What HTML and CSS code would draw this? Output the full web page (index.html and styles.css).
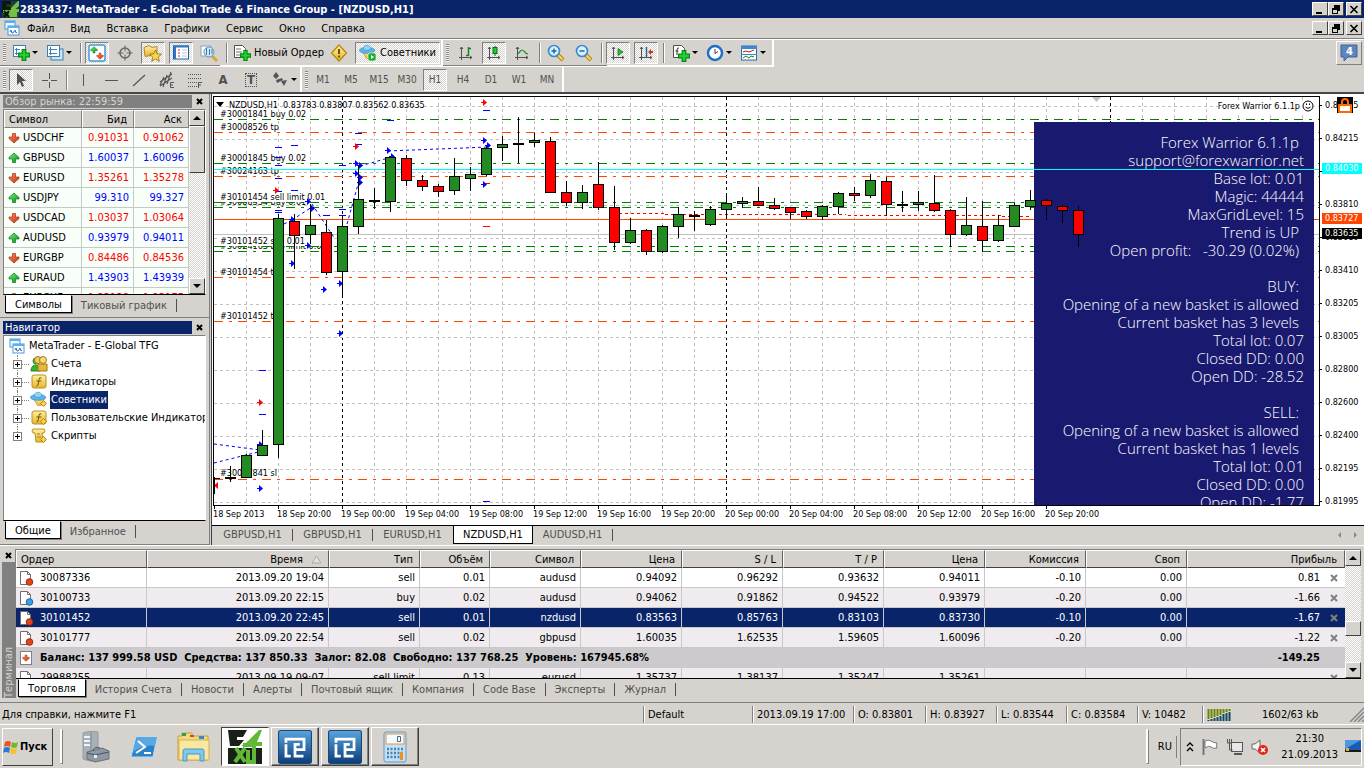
FILE: index.html
```html
<!DOCTYPE html>
<html lang="ru">
<head>
<meta charset="utf-8">
<title>2833437: MetaTrader - E-Global Trade &amp; Finance Group - [NZDUSD,H1]</title>
<link rel="stylesheet" href="styles.css">
</head>
<body>
<svg class="defs" width="0" height="0" aria-hidden="true">
  <defs>
    <linearGradient id="gBlue" x1="0" y1="0" x2="0" y2="1"><stop offset="0" stop-color="#5aa6dc"/><stop offset="1" stop-color="#0b3c78"/></linearGradient>
    <linearGradient id="gGold" x1="0" y1="0" x2="0" y2="1"><stop offset="0" stop-color="#fff0a0"/><stop offset="1" stop-color="#e8b428"/></linearGradient>
    <linearGradient id="gRed" x1="0" y1="0" x2="1" y2="1"><stop offset="0" stop-color="#ff9060"/><stop offset="1" stop-color="#c83010"/></linearGradient>
    <linearGradient id="gGreen" x1="0" y1="0" x2="1" y2="1"><stop offset="0" stop-color="#70f080"/><stop offset="1" stop-color="#089018"/></linearGradient>
    <symbol id="plus" viewBox="0 0 10 10"><path d="M3.500 .5h3v3h3v3h-3v3h-3v-3h-3v-3h3z" fill="#20d030" stroke="#078a10"/></symbol>
    <symbol id="down" viewBox="0 0 12 12"><path d="M4.500 1.500h3V5H11v1.500L6 11 1 6.500V5h3.500z" fill="url(#gRed)" stroke="#a03010" stroke-width=".7"/></symbol>
    <symbol id="up" viewBox="0 0 12 12"><path d="M4.500 10.500h3V7H11V5.500L6 1 1 5.500V7h3.500z" fill="url(#gGreen)" stroke="#087018" stroke-width=".7"/></symbol>
    <symbol id="doc" viewBox="0 0 16 16"><path d="M2.500 1.500h7l3 3v10h-10z" fill="#fff" stroke="#707070"/><path d="M9.500 1.500v3h3" fill="none" stroke="#707070"/></symbol>
    <symbol id="charts" viewBox="0 0 16 16"><rect x="1" y="1" width="10" height="8" fill="#eef8ff" stroke="#4898d8"/><rect x="1" y="1" width="10" height="2" fill="#58b0f0"/><rect x="4" y="6" width="11" height="9" fill="#fff" stroke="#4898d8"/><rect x="4" y="6" width="11" height="2" fill="#58b0f0"/><path d="M6 12l1-2 1 3h1l2-3 1 3 1-1" fill="none" stroke="#3070c0"/></symbol>
    <symbol id="hat" viewBox="0 0 20 20"><path d="M4 9l5 8h4l4-8z" fill="url(#gGold)" stroke="#c89c30"/><ellipse cx="9.500" cy="7.500" rx="9" ry="3.500" fill="#5cb4e8" stroke="#3c8cc4" stroke-width=".8"/><path d="M5 6c0-6 9-6 9 0-2 2-7 2-9 0z" fill="#90d4f8" stroke="#3c8cc4" stroke-width=".7"/></symbol>
    <symbol id="diamond" viewBox="0 0 8 8"><path d="M4 .5L7.500 4 4 7.500.5 4z" fill="#f6d040" stroke="#a88010"/></symbol>
    <symbol id="axes" viewBox="0 0 16 16"><path d="M3.500 2v13M1 12.500h13M2 4l1.500-2L5 4M12 11l2 1.500-2 1.500" fill="none" stroke="#505050"/></symbol>
    <symbol id="lens" viewBox="0 0 18 18"><path d="M10.500 10.500l5.500 5.500" stroke="#b08018" stroke-width="4"/><path d="M11 11l4.500 4.500" stroke="#f8dc60" stroke-width="2"/><circle cx="7" cy="7" r="5.500" fill="#d8f0ff" stroke="#3a88c8" stroke-width="1.600"/></symbol>
    <symbol id="mscroll" viewBox="0 0 8 4"><path d="M0 4L4 0l4 4z"/></symbol>
    <symbol id="rlogo" viewBox="0 0 32 32"><rect x=".5" y=".5" width="31" height="31" rx="2" fill="url(#gBlue)" stroke="#184878"/><path d="M7.500 12V8.500h17v10H16v-5h4.500M7.500 13.500v11H12M16 18.500v6h8" fill="none" stroke="#fff" stroke-width="2.600"/></symbol>
  </defs>
</svg>

<header class="titlebar">
  <svg class="app-icon" width="17" height="17" viewBox="0 0 34 34" aria-hidden="true"><path fill="#0c180c" d="M0 0h18v7H9v4h8v7H9v6H0z"/><path fill="#74c044" d="M18 14L32 0h2v10l-7 6h7v6h-4v10H10l4-8H2v-6h16z"/><path d="M4 20l10 12m0-12L4 32" stroke="#0c180c" stroke-width="4"/></svg>
  <h1>2833437: MetaTrader - E-Global Trade &amp; Finance Group - [NZDUSD,H1]</h1>
  <div class="winbtns">
    <button aria-label="Свернуть"><svg width="10" height="9"><path d="M1 7h6v2H1z"/></svg></button>
    <button aria-label="Восстановить"><svg width="10" height="9"><path d="M3 0h6v6H7V3H3zM1 3h6v6H1zm1 2v3h4V5z" fill-rule="evenodd"/></svg></button>
    <button aria-label="Закрыть" class="gap"><svg width="10" height="9"><path d="M1.500 1l7 7m0-7l-7 7" stroke="#000" stroke-width="1.600"/></svg></button>
  </div>
</header>

<nav class="menubar">
  <svg width="16" height="16" aria-hidden="true"><use href="#charts"/></svg>
  <div class="menu"><button>Файл</button><button>Вид</button><button>Вставка</button><button>Графики</button><button>Сервис</button><button>Окно</button><button>Справка</button></div>
  <div class="winbtns">
    <button aria-label="Свернуть график"><svg width="10" height="9"><path d="M1 7h6v2H1z"/></svg></button>
    <button aria-label="Восстановить график"><svg width="10" height="9"><path d="M3 0h6v6H7V3H3zM1 3h6v6H1zm1 2v3h4V5z" fill-rule="evenodd"/></svg></button>
    <button aria-label="Закрыть график" class="gap"><svg width="10" height="9"><path d="M1.500 1l7 7m0-7l-7 7" stroke="#000" stroke-width="1.600"/></svg></button>
  </div>
</nav>

<div class="toolrow">
  <div class="toolbar">
    <i class="grip"></i>
    <button class="drop" aria-label="Новый график"><svg width="18" height="18"><rect x="1.500" y="1.500" width="12" height="11" fill="#fff" stroke="#3a80b8"/><path d="M4.500 4v7M3 5.500h5M3 9.500h4" stroke="#3a80b8"/><use href="#plus" x="6" y="5" width="12" height="12"/></svg><b></b></button>
    <button class="drop" aria-label="Профили"><svg width="18" height="18"><rect x="5" y="5" width="12" height="11" fill="#c8e4f8" stroke="#3a80b8"/><rect x="1.500" y="1.500" width="12" height="11" fill="#fff" stroke="#3a80b8"/><path d="M4.500 3v8M3 5.500h8M3 9.500h8" stroke="#3a80b8"/></svg><b></b></button>
    <i class="sep"></i>
    <button class="tb on" aria-label="Обзор рынка"><svg width="18" height="18"><rect x="1" y="1" width="16" height="16" rx="2" fill="#fff" stroke="#3a9ce0" stroke-width="1.500"/><use href="#up" x="2" y="2" width="8" height="8"/><use href="#down" x="8" y="8" width="8" height="8"/></svg></button>
    <button class="tb" aria-label="Окно данных"><svg width="18" height="18" fill="none" stroke="#666"><circle cx="9" cy="9" r="5" stroke-width="1.500"/><path d="M9 1.500v6M9 10.500v6M1.500 9h6M10.500 9h6"/></svg></button>
    <button class="tb on" aria-label="Навигатор"><svg width="20" height="18"><path d="M1 3.500l5-2 3 2 5-1v8l-12 2z" fill="url(#gGold)" stroke="#b08a28"/><path d="M12.500 6l1.700 3.800 4.300.4-3.200 2.900 1 4.200-3.800-2.200-3.800 2.200 1-4.200-3.200-2.900 4.300-.4z" fill="#f8d448" stroke="#8a6c14" stroke-width=".8"/></svg></button>
    <button class="tb on" aria-label="Терминал"><svg width="18" height="18"><rect x="1.500" y="2" width="15" height="13" fill="#fff" stroke="#2060a8"/><path d="M1 2.500h16M3 2v13" stroke="#2878c8" stroke-width="2"/><path d="M6 6h2M6 9h2M6 12h2" stroke="#c03030"/><path d="M10 6h5M10 9h5M10 12h5" stroke="#b0c8e0"/></svg></button>
    <button class="tb" aria-label="Тестер стратегий"><svg width="18" height="18"><path d="M1 2h10v10H1z" fill="#fff" stroke="#88a0b8"/><path d="M12 12l5 5" stroke="#d8a830" stroke-width="3"/><circle cx="9" cy="8" r="5" fill="#d0e8f8" stroke="#6098c8"/><path d="M6.500 4v7M9.500 5v6M12 5v5" stroke="#4078a8"/></svg></button>
    <i class="sep"></i>
    <button class="txt"><svg width="18" height="18"><path d="M1.500 1.500h8l3 3v9h-11z" fill="#fff" stroke="#505050"/><path d="M3 5h5M3 8h6M3 11h4" stroke="#707070"/><use href="#plus" x="7" y="6" width="11" height="11"/></svg>Новый Ордер</button>
    <button class="tb" aria-label="MetaEditor"><svg width="18" height="18"><path d="M9 1l7.500 8L9 17 1.500 9z" fill="url(#gGold)" stroke="#b48608" stroke-width="1.200"/><path d="M9 5v5M9 11.500v2" stroke="#5c4400" stroke-width="1.800"/></svg></button>
    <button class="txt on"><svg width="18" height="18"><use href="#hat" width="17" height="17"/><rect x="9" y="9" width="8" height="8" rx="2" fill="#18b028" stroke="#fff" stroke-width=".6"/><path d="M12 11l3 2-3 2z" fill="#fff"/></svg>Советники</button>
  </div>
  <div class="toolbar">
    <i class="grip"></i>
    <button class="tb" aria-label="Бары"><svg width="16" height="16"><use href="#axes"/><path d="M10.500 2v9M8 10.500h2M11 3.500h2" stroke="#108820" stroke-width="1.500"/></svg></button>
    <button class="tb on" aria-label="Японские свечи"><svg width="16" height="16"><use href="#axes"/><path d="M9 1v10" stroke="#087018"/><rect x="7" y="2.500" width="4" height="6" fill="#20c838" stroke="#087018"/></svg></button>
    <button class="tb" aria-label="Линия"><svg width="16" height="16"><use href="#axes"/><path d="M3 9c3-1 3-4 5-4s3 4 6 4" fill="none" stroke="#108820" stroke-width="1.200"/></svg></button>
    <i class="sep"></i>
    <button class="tb" aria-label="Приблизить"><svg width="18" height="18"><use href="#lens"/><path d="M4.500 7h5M7 4.500v5" stroke="#1868b0" stroke-width="1.500"/></svg></button>
    <button class="tb" aria-label="Отдалить"><svg width="18" height="18"><use href="#lens"/><path d="M4.500 7h5" stroke="#1868b0" stroke-width="1.500"/></svg></button>
    <i class="sep"></i>
    <button class="tb on" aria-label="Автопрокрутка"><svg width="16" height="16"><use href="#axes"/><path d="M8 3.500l5 3.500-5 3.500z" fill="#20c030" stroke="#087018" stroke-width=".7"/></svg></button>
    <button class="tb on" aria-label="Сдвиг графика"><svg width="16" height="16"><use href="#axes"/><path d="M8.500 2v10" stroke="#1868b0" stroke-width="1.500"/><path d="M10 7l3-3v2h2v2h-2v2z" fill="#d03810"/></svg></button>
    <i class="sep"></i>
    <button class="drop" aria-label="Индикаторы"><svg width="18" height="18"><path d="M1.500 1.500h8l3 3v9h-11z" fill="#fff" stroke="#505050"/><path d="M7 4q-2-.5-2 2v5M3.500 7h3" stroke="#333" fill="none"/><use href="#plus" x="6" y="6" width="12" height="12"/></svg><b></b></button>
    <button class="drop" aria-label="Периоды"><svg width="18" height="18"><circle cx="9" cy="9" r="7" fill="#fff" stroke="#1c70c8" stroke-width="2.500"/><path d="M9 5v4.500l3-2" fill="none" stroke="#404040"/></svg><b></b></button>
    <button class="drop" aria-label="Шаблоны"><svg width="18" height="18"><rect x="1.500" y="2" width="15" height="14" fill="#fff" stroke="#2c6ca8"/><path d="M1 3.500h16" stroke="#3a88d0" stroke-width="3"/><path d="M1 10.500h16" stroke="#3a88d0"/><path d="M3 8l3-1 3 1 5-2" fill="none" stroke="#b02020"/><path d="M3 14l3-2 3 2 2-2 3 1" fill="none" stroke="#108820"/></svg><b></b></button>
  </div>
  <button class="chat" aria-label="Сообщения: 4"><svg width="18" height="18"><path d="M1 1h16v12H8l-4 4v-4H1z" fill="#5c86bc" stroke="#3c649c"/></svg><span>4</span></button>
</div>

<div class="toolrow second">
  <div class="toolbar lines">
    <i class="grip"></i>
    <button class="tb on" aria-label="Курсор"><svg width="16" height="16"><path d="M4 1v12l3-3 2 5 2-1-2-5h4z" fill="#505050"/></svg></button>
    <button class="tb" aria-label="Перекрестие"><svg width="16" height="16"><path d="M8.500 1v6M8.500 10v6M1 8.500h6M10 8.500h6" stroke="#555"/></svg></button>
    <i class="sep"></i>
    <button class="tb" aria-label="Вертикальная линия"><svg width="16" height="16"><path d="M8.500 2v12" stroke="#555"/></svg></button>
    <button class="tb" aria-label="Горизонтальная линия"><svg width="16" height="16"><path d="M2 8.500h13" stroke="#555"/></svg></button>
    <button class="tb" aria-label="Трендовая линия"><svg width="16" height="16"><path d="M2 14L14 3" stroke="#555" stroke-width="1.200"/></svg></button>
    <button class="tb" aria-label="Канал"><svg width="18" height="18"><path d="M2 11L14 3M2 15L14 7M5 16L9 4M9 13l4-12M2 14L6 6" stroke="#555" stroke-width="1.200"/><path d="M16 11.500h-3.500v5H16M12.500 14H15" fill="none" stroke="#555"/></svg></button>
    <button class="tb" aria-label="Фибоначчи"><svg width="18" height="18"><path d="M2 3.500h14M2 7.500h14M2 11.500h9M2 15.500h9" stroke="#555" stroke-dasharray="1 1"/><path d="M12.500 17v-5.500H16M12.500 14H15" fill="none" stroke="#555"/></svg></button>
    <button class="tb glyph" aria-label="Текст">A</button>
    <button class="tb glyph" aria-label="Метка"><span class="boxed">T</span></button>
    <button class="drop" aria-label="Стрелки"><svg width="18" height="18"><path d="M2 5l3-4 3 4-3 3zM10 10l6-1-3 6zM5 9l6-2 1 2-6 3z" fill="#555"/></svg><b></b></button>
  </div>
  <div class="toolbar frames">
    <i class="grip"></i>
    <button class="tb tf">M1</button><button class="tb tf">M5</button><button class="tb tf">M15</button><button class="tb tf">M30</button><button class="tb tf on">H1</button><button class="tb tf">H4</button><button class="tb tf">D1</button><button class="tb tf">W1</button><button class="tb tf">MN</button>
  </div>
</div>

<main class="work">
  <aside class="docks">
    <section class="dock">
      <header class="dock-head idle"><h2>Обзор рынка: 22:59:59</h2><button aria-label="Закрыть обзор рынка"><svg width="7" height="7"><path d="M1 1l5 5m0-5L1 6" stroke="#000" stroke-width="2"/></svg></button></header>
      <div class="dock-body">
        <div class="clip">
          <table class="quotes">
            <colgroup><col><col class="w52"><col class="w55"></colgroup>
            <thead><tr><th>Символ</th><th>Бид</th><th>Аск</th></tr></thead>
            <tbody>
              <tr class="dn"><td><svg width="12" height="12"><use href="#down"/></svg>USDCHF</td><td>0.91031</td><td>0.91062</td></tr>
              <tr class="up"><td><svg width="12" height="12"><use href="#up"/></svg>GBPUSD</td><td>1.60037</td><td>1.60096</td></tr>
              <tr class="dn"><td><svg width="12" height="12"><use href="#down"/></svg>EURUSD</td><td>1.35261</td><td>1.35278</td></tr>
              <tr class="up"><td><svg width="12" height="12"><use href="#up"/></svg>USDJPY</td><td>99.310</td><td>99.327</td></tr>
              <tr class="dn"><td><svg width="12" height="12"><use href="#down"/></svg>USDCAD</td><td>1.03037</td><td>1.03064</td></tr>
              <tr class="up"><td><svg width="12" height="12"><use href="#up"/></svg>AUDUSD</td><td>0.93979</td><td>0.94011</td></tr>
              <tr class="dn"><td><svg width="12" height="12"><use href="#down"/></svg>EURGBP</td><td>0.84486</td><td>0.84536</td></tr>
              <tr class="up"><td><svg width="12" height="12"><use href="#up"/></svg>EURAUD</td><td>1.43903</td><td>1.43939</td></tr>
              <tr class="dn"><td><svg width="12" height="12"><use href="#down"/></svg>EURCHF</td><td>1.23138</td><td>1.23175</td></tr>
            </tbody>
          </table>
        </div>
        <div class="scroll"><button aria-label="Вверх"><svg width="8" height="4"><use href="#mscroll"/></svg></button><span class="thumb tall"></span><button class="last" aria-label="Вниз"><svg width="8" height="4" class="flip"><use href="#mscroll"/></svg></button></div>
      </div>
      <div class="tabs"><button class="active">Символы</button><button>Тиковый график</button></div>
    </section>
    <section class="dock">
      <header class="dock-head"><h2>Навигатор</h2><button aria-label="Закрыть навигатор"><svg width="7" height="7"><path d="M1 1l5 5m0-5L1 6" stroke="#000" stroke-width="2"/></svg></button></header>
      <div class="dock-body">
        <ul class="tree">
          <li class="root"><svg width="16" height="16"><use href="#charts"/></svg><span>MetaTrader - E-Global TFG</span></li>
          <li><i class="exp"></i><svg width="18" height="18"><circle cx="6" cy="6" r="3" fill="#58c848" stroke="#208818"/><path d="M1 16c0-8 9-8 9 0z" fill="#38b030" stroke="#208818"/><circle cx="8" cy="5" r="3.500" fill="#f0cc58" stroke="#a07818"/><circle cx="13" cy="5" r="3.500" fill="#f8dc78" stroke="#a07818"/><path d="M8 16V9h9v7z" fill="#e8b838" stroke="#a07818"/></svg><span>Счета</span></li>
          <li><i class="exp"></i><svg width="18" height="18"><rect x="2" y="2" width="14" height="13" rx="2" fill="url(#gGold)" stroke="#b89020"/><path d="M11.500 5q-2.500-1-2.500 1.500L8 12q-.5 1-1.500 1M6.500 8h5" fill="none" stroke="#705408"/></svg><span>Индикаторы</span></li>
          <li class="sel"><i class="exp"></i><svg width="18" height="18"><use href="#hat" width="17" height="17"/><use href="#diamond" x="10" y="9" width="7" height="7"/></svg><span>Советники</span></li>
          <li><i class="exp"></i><svg width="18" height="18"><rect x="2" y="2" width="14" height="13" rx="2" fill="url(#gGold)" stroke="#b89020"/><path d="M11.500 5q-2.500-1-2.500 1.500L8 12q-.5 1-1.500 1M6.500 8h5" fill="none" stroke="#705408"/><use href="#diamond" x="10" y="9" width="7" height="7"/></svg><span>Пользовательские Индикаторы</span></li>
          <li class="end"><i class="exp"></i><svg width="18" height="18"><path d="M3 2h11q2 2 0 4h-2l1 9H6L5 6H3q-2-2 0-4z" fill="url(#gGold)" stroke="#b89020"/><path d="M7 7h3M7 10h4" stroke="#a07818"/><use href="#diamond" x="10" y="9" width="7" height="7"/></svg><span>Скрипты</span></li>
        </ul>
      </div>
      <div class="tabs"><button class="active">Общие</button><button>Избранное</button></div>
    </section>
  </aside>

  <section class="chartwin">
    <div class="chart">
      <div class="plot">
        <svg id="back" class="layer" aria-hidden="true"></svg>
        <div class="ea">
          <p class="in">Forex Warrior 6.1.1p</p><p>support@forexwarrior.net</p><p>Base lot: 0.01</p><p>Magic: 44444</p><p>MaxGridLevel: 15</p><p class="in">Trend is UP</p><p class="in">Open profit: &nbsp; -30.29 (0.02%)</p><p>&nbsp;</p>
          <p class="in">BUY:</p><p class="in">Opening of a new basket is allowed</p><p class="in">Current basket has 3 levels</p><p>Total lot: 0.07</p><p>Closed DD: 0.00</p><p>Open DD: -28.52</p><p>&nbsp;</p>
          <p class="in">SELL:</p><p class="in">Opening of a new basket is allowed</p><p class="in">Current basket has 1 levels</p><p>Total lot: 0.01</p><p>Closed DD: 0.00</p><p>Open DD: -1.77</p>
        </div>
        <svg id="front" class="layer" aria-hidden="true"></svg>
        <div class="ea-name">Forex Warrior 6.1.1p<svg width="12" height="12" fill="none" stroke="#000"><circle cx="6" cy="6" r="5"/><path d="M3.500 7q2.500 3 5 0M4.500 3.500v1.500M7.500 3.500v1.500"/></svg></div>
      </div>
      <div class="prices">
        <span>0.84415</span><span>0.84215</span><span>0.84015</span><span>0.83810</span><span>0.83610</span><span>0.83410</span><span>0.83205</span><span>0.83005</span><span>0.82800</span><span>0.82600</span><span>0.82400</span><span>0.82195</span><span>0.81995</span>
        <mark class="ask">0.84030</mark><mark class="level">0.83727</mark><mark class="bid">0.83635</mark>
        <svg class="lock" width="16" height="16"><path d="M0 0h16v16H0z"/><path d="M5 8V5q0-3 3-3t3 3v3" fill="none" stroke="#ff6a00" stroke-width="2"/><rect x="1" y="7" width="14" height="9" rx="1" fill="#ff6a00"/><rect x="3" y="9" width="10" height="5" fill="#fff"/></svg>
      </div>
      <div class="times"><span>18 Sep 2013</span><span>18 Sep 20:00</span><span>19 Sep 00:00</span><span>19 Sep 04:00</span><span>19 Sep 08:00</span><span>19 Sep 12:00</span><span>19 Sep 16:00</span><span>19 Sep 20:00</span><span>20 Sep 00:00</span><span>20 Sep 04:00</span><span>20 Sep 08:00</span><span>20 Sep 12:00</span><span>20 Sep 16:00</span><span>20 Sep 20:00</span></div>
    </div>
    <div class="chart-tabs"><button>GBPUSD,H1</button><button>GBPUSD,H1</button><button class="pre">EURUSD,H1</button><button class="active">NZDUSD,H1</button><button>AUDUSD,H1</button>
      <svg width="34" height="10" fill="#888"><path d="M12 2v6L9 5zM25 2v6l3-3z"/></svg></div>
  </section>
</main>

<section class="terminal">
  <div class="strip"><button aria-label="Закрыть терминал"><svg width="7" height="7"><path d="M1 1l5 5m0-5L1 6" stroke="#000" stroke-width="2"/></svg></button><h2>Терминал</h2></div>
  <div class="term-main">
    <div class="term-body">
      <div class="clip">
        <table class="orders">
          <colgroup><col class="w131"><col class="w182"><col class="w91"><col class="w70"><col class="w91"><col class="w101"><col class="w101"><col class="w101"><col class="w101"><col class="w101"><col class="w101"><col></colgroup>
          <thead><tr><th>Ордер</th><th>Время <svg class="sort" width="11" height="9"><path d="M1 8l4.500-7L10 8z" fill="#e4e2de" stroke="#aaa"/></svg></th><th>Тип</th><th>Объём</th><th>Символ</th><th>Цена</th><th>S / L</th><th>T / P</th><th>Цена</th><th>Комиссия</th><th>Своп</th><th>Прибыль</th></tr></thead>
          <tbody>
            <tr><td><svg width="16" height="16"><use href="#doc"/><circle cx="11.500" cy="12" r="3.300" fill="#e04418" stroke="#a02808"/></svg>30087336</td><td>2013.09.20 19:04</td><td>sell</td><td>0.01</td><td>audusd</td><td>0.94092</td><td>0.96292</td><td>0.93632</td><td>0.94011</td><td>-0.10</td><td>0.00</td><td>0.81<button aria-label="Закрыть ордер"><svg width="8" height="8"><path d="M1 1l6 6m0-6L1 7" stroke="#808080" stroke-width="2"/></svg></button></td></tr>
            <tr class="alt"><td><svg width="16" height="16"><use href="#doc"/><circle cx="11.500" cy="12" r="3.300" fill="#38a0e0" stroke="#1868a8"/></svg>30100733</td><td>2013.09.20 22:15</td><td>buy</td><td>0.02</td><td>audusd</td><td>0.94062</td><td>0.91862</td><td>0.94522</td><td>0.93979</td><td>-0.20</td><td>0.00</td><td>-1.66<button aria-label="Закрыть ордер"><svg width="8" height="8"><path d="M1 1l6 6m0-6L1 7" stroke="#808080" stroke-width="2"/></svg></button></td></tr>
            <tr class="sel"><td><svg width="16" height="16"><use href="#doc"/><circle cx="11.500" cy="12" r="3.300" fill="#e04418" stroke="#a02808"/></svg>30101452</td><td>2013.09.20 22:45</td><td>sell</td><td>0.01</td><td>nzdusd</td><td>0.83563</td><td>0.85763</td><td>0.83103</td><td>0.83730</td><td>-0.10</td><td>0.00</td><td>-1.67<button aria-label="Закрыть ордер"><svg width="8" height="8"><path d="M1 1l6 6m0-6L1 7" stroke="#808080" stroke-width="2"/></svg></button></td></tr>
            <tr class="alt"><td><svg width="16" height="16"><use href="#doc"/><circle cx="11.500" cy="12" r="3.300" fill="#e04418" stroke="#a02808"/></svg>30101777</td><td>2013.09.20 22:54</td><td>sell</td><td>0.02</td><td>gbpusd</td><td>1.60035</td><td>1.62535</td><td>1.59605</td><td>1.60096</td><td>-0.20</td><td>0.00</td><td>-1.22<button aria-label="Закрыть ордер"><svg width="8" height="8"><path d="M1 1l6 6m0-6L1 7" stroke="#808080" stroke-width="2"/></svg></button></td></tr>
            <tr class="sum"><td colspan="11"><svg width="16" height="16"><rect x="2.500" y="1.500" width="11" height="13" fill="#fff" stroke="#808080"/><use href="#down" x="4" y="4" width="8" height="8"/></svg>Баланс: 137 999.58 USD&nbsp; Средства: 137 850.33&nbsp; Залог: 82.08&nbsp; Свободно: 137 768.25&nbsp; Уровень: 167945.68%</td><td>-149.25</td></tr>
            <tr class="alt"><td><svg width="16" height="16"><use href="#doc"/><circle cx="11.500" cy="12" r="3.300" fill="#e04418" stroke="#a02808"/></svg>29988255</td><td>2013.09.19 09:07</td><td>sell limit</td><td>0.13</td><td>eurusd</td><td>1.35737</td><td>1.38137</td><td>1.35247</td><td>1.35261</td><td></td><td></td><td><button aria-label="Закрыть ордер"><svg width="8" height="8"><path d="M1 1l6 6m0-6L1 7" stroke="#808080" stroke-width="2"/></svg></button></td></tr>
          </tbody>
        </table>
      </div>
      <div class="scroll"><button aria-label="Вверх"><svg width="8" height="4"><use href="#mscroll"/></svg></button><span class="thumb short"></span><button class="last" aria-label="Вниз"><svg width="8" height="4" class="flip"><use href="#mscroll"/></svg></button></div>
    </div>
    <div class="tabs"><button class="active">Торговля</button><button>История Счета</button><button>Новости</button><button>Алерты</button><button>Почтовый ящик</button><button>Компания</button><button>Code Base</button><button>Эксперты</button><button>Журнал</button></div>
  </div>
</section>

<footer class="status">
  <span>Для справки, нажмите F1</span><span>Default</span><span>2013.09.19 17:00</span><span>O: 0.83801</span><span>H: 0.83927</span><span>L: 0.83544</span><span>C: 0.83584</span><span>V: 10482</span>
  <span class="net"><svg width="24" height="12"><path d="M1.500 0v10M4.500 0v9M7.500 0v8M10.500 0v7M13.500 0v6M16.500 0v4M19.500 0v3M22.500 0v2" stroke="#6a8400" stroke-width="2"/><path d="M1.500 11v1M4.500 10v2M7.500 9v3M10.500 8v4M13.500 7v5M16.500 5v7M19.500 4v8M22.500 3v9" stroke="#104860" stroke-width="2"/></svg>1602/63 kb<svg class="size" width="15" height="15"><path d="M1 15L15 1M5 15L15 5M9 15l6-6M13 15l2-2" stroke="#888" stroke-width="1.500"/></svg></span>
</footer>

<nav class="taskbar">
  <button class="start"><svg width="17" height="16"><path d="M2 3q3-2 6 0L7 8Q4 6 1 8z" fill="#f05020"/><path d="M9 3q3 2 6 0l-1 5q-3 2-6 0z" fill="#70b830"/><path d="M1 9q3-2 6 0l-1 5q-3-2-6 0z" fill="#2878d8"/><path d="M8 9q3 2 6 0l-1 5q-3 2-6 0z" fill="#f8c020"/></svg>Пуск</button>
  <i class="bar"></i>
  <div class="quick">
    <button aria-label="Диспетчер сервера"><svg width="32" height="32"><path d="M4 2l8-2 7 1v28l-8 1-7-2z" fill="#a8b0b8" stroke="#909aa2"/><path d="M12 1v28" stroke="#808890"/><path d="M5 6h6M5 10h6M5 14h6" stroke="#f0f4f8" stroke-width="2"/><path d="M8 21l15-4 7 3v8l-14 3-8-3z" fill="#8c98a4" stroke="#68727c"/><path d="M8 22l8 2 14-3M14 20q1-5 7-3" fill="none" stroke="#48525c"/><path d="M15 24h3v3h-3z" fill="#e8eef2"/></svg></button>
    <button aria-label="PowerShell"><svg width="32" height="32"><path d="M8 6h21l-4 20H3z" fill="#2c80c8" stroke="#b8dcf4"/><path d="M9 6h20l-2 9q-10-2-22 6z" fill="#58a8e4"/><path d="M10 10l7 6-9 6M16 22h7" fill="none" stroke="#fff" stroke-width="2"/></svg></button>
    <button aria-label="Проводник"><svg width="34" height="32"><path d="M1 5h4V2h10v3h16v24H1z" fill="#f4d880" stroke="#c8a040"/><path d="M5 2h4v3H5z" fill="#30a040"/><path d="M13 4h4v2h-4z" fill="#d04828"/><path d="M22 5h5v3h-5z" fill="#3888d0"/><path d="M2 9h30v20H2z" fill="#fae8a0" stroke="#d4b050"/><path d="M6 30V20q0-2 2-2h17q2 0 2 2v10h-4v-7H10v7z" fill="#80c8ec" stroke="#4898c8"/></svg></button>
  </div>
  <button class="task run" aria-label="MetaTrader"><svg width="34" height="34" viewBox="0 0 34 34"><path fill="#182018" d="M0 0h19l-4 7H9v3h7l-5 6H2z"/><path d="M0 18h34v16H0z" fill="#182018"/><path fill="#60b838" d="M19 12L31 0h3l-5 12h5v4h-6v16h-4V16H13z"/><path d="M8 18l9 14m0-14L7 32M20 20v12h8" stroke="#60b838" stroke-width="4" fill="none"/><path d="M15 13h9v4h-9z" fill="#60b838"/></svg></button>
  <button class="task" aria-label="Терминал 1"><svg width="34" height="34"><use href="#rlogo"/></svg></button>
  <button class="task" aria-label="Терминал 2"><svg width="34" height="34"><use href="#rlogo"/></svg></button>
  <button class="task" aria-label="Калькулятор"><svg width="24" height="32"><rect x="1" y="1" width="22" height="30" rx="2" fill="#c4e0f4" stroke="#6098c8"/><rect x="3" y="3" width="18" height="10" fill="#f4faff" stroke="#e09838"/><path d="M14.500 5.500h3v5h-3z" fill="none" stroke="#486888"/><path d="M4 18h16M4 22h16M4 26h16" stroke="#4880b8" stroke-width="2.500" stroke-dasharray="2 1.500"/><path d="M17 21h3v8h-3z" fill="#f09020"/></svg></button>
  <i class="bar right"></i>
  <button class="lang">RU</button>
  <div class="tray">
    <svg width="8" height="12" fill="none" stroke="#000" stroke-width="1.400"><path d="M1 5l3-3 3 3M1 10l3-3 3 3"/></svg>
    <svg width="18" height="18"><path d="M2.500 1v16" stroke="#777" stroke-width="2"/><path d="M4 3q3-2 6 0t6 2q-1 3 0 5-4 1-6-1t-6 1z" fill="#fff" stroke="#777"/></svg>
    <svg width="18" height="18"><rect x="5.500" y="4.500" width="11" height="9" fill="#e8e8e8" stroke="#555"/><path d="M8 16h8" stroke="#555" stroke-width="2"/><path d="M1.500 1v4h4V1M3.500 1v11h3" fill="none" stroke="#555"/></svg>
    <svg width="18" height="18"><path d="M1 6h3l5-4v13l-5-4H1z" fill="#f4f4f4" stroke="#666"/><circle cx="12" cy="12" r="5" fill="#e02818"/><path d="M10 10l4 4m0-4l-4 4" stroke="#fff" stroke-width="1.600"/></svg>
    <div class="clock"><span>21:30</span><span>21.09.2013</span></div>
    <svg width="16" height="14"><rect width="16" height="12" rx="1" fill="#1c5cb0"/><path d="M0 0h16L0 9z" fill="#4c98e0"/><path d="M0 10h16v2H0z" fill="#181818"/><path d="M1 8h3v3H1z" fill="#f0a828"/></svg>
  </div>
</nav>
<script src="chart.js"></script>
</body>
</html>
```

FILE: chart.js
```js
(function () {
  var NS = 'http://www.w3.org/2000/svg';
  var back = document.getElementById('back');
  var front = document.getElementById('front');

  function add(parent, tag, attrs, text) {
    var el = document.createElementNS(NS, tag);
    for (var k in attrs) el.setAttribute(k, attrs[k]);
    if (text) el.textContent = text;
    parent.appendChild(el);
    return el;
  }
  function hline(g, y, cls, x1, x2) {
    add(g, 'line', { x1: x1 || 0, x2: x2 || '100%', y1: y + 0.5, y2: y + 0.5, 'class': cls });
  }

  // Grid: 32px per two bars, 33px per price step.
  for (var x = 32, n = 1; x < 1900; x += 32, n++) {
    add(back, 'line', { x1: x + 0.5, x2: x + 0.5, y1: 0, y2: '100%', 'class': n % 12 === 4 ? 'day' : 'grid' });
  }
  for (var y = 9; y < 900; y += 33) hline(back, y, 'grid');

  // Order labels, lower ones first; the flagged ones have an opaque backing.
  [[108, '#30088334 buy 0.01'], [152, '#30024163 buy limit 0.01'],
   [20, '#30001841 buy 0.02'], [33, '#30008526 tp'], [64, '#30001845 buy 0.02'],
   [77, '#30024163 tp'], [103, '#30101454 sell limit 0.01', 1], [147, '#30101452 sell 0.01', 1],
   [178, '#30101454 tp'], [222, '#30101452 tp'], [379, '#30001841 sl']
  ].forEach(function (l) {
    if (l[2]) add(back, 'rect', { x: 6, y: l[0] - 8, width: 106, height: 10, fill: '#fff' });
    add(back, 'text', { x: 6, y: l[0], 'class': 'lbl' }, l[1]);
  });

  [22, 66, 105, 110, 149, 154].forEach(function (y) { hline(back, y, 'buy'); });
  [35, 79, 180, 224, 382].forEach(function (y) { hline(back, y, 'stop'); });
  hline(back, 122, 'level');
  hline(back, 137, 'bid');
  hline(back, 116, 'trend', 405, 451);
  hline(back, 117, 'trend', 451, 632);
  hline(back, 118, 'trend', 634, 788);
  hline(back, 119, 'trend', 788, 818);
  add(back, 'path', { d: 'M878 0h9l-4.500 5z', fill: '#c0c0c0' });

  hline(front, 72, 'ask');

  // Deal links
  [[0, 347, 46, 353], [0, 366, 48, 354], [70, 127, 78, 123], [78, 123, 98, 110], [98, 107, 121, 142],
   [133, 127, 146, 80], [146, 69, 178, 60], [174, 54, 274, 50]
  ].forEach(function (d) {
    add(front, 'line', { x1: d[0], y1: d[1], x2: d[2], y2: d[3], 'class': 'deal' });
  });

  // Level ticks: x, y, colour
  [[64, 50], [64, 60], [64, 68], [64, 81], [64, 94], [64, 113], [64, 115], [80, 48], [80, 93], [112, 118],
   [128, 68], [128, 112], [128, 118], [144, 36], [144, 47], [176, 23], [272, 13], [48, 273], [48, 317], [272, 404],
   [272, 129, 'red'], [272, 86, 'red']
  ].forEach(function (t) {
    add(front, 'rect', { x: t[0] - 3, y: t[1], width: 7, height: 1, fill: t[2] || '#00f' });
  });

  function arrow(x, y, c) {
    add(front, 'path', { d: 'M' + (x - 3) + ' ' + (y - 1) + 'h2v-3l4 3.500-4 3.500v-3h-2z', fill: c });
  }
  [[142, 67], [146, 69], [142, 77], [146, 81], [146, 86], [174, 54], [178, 60], [270, 44], [274, 49], [270, 88],
   [94, 105], [98, 112], [78, 123], [78, 167], [94, 149], [110, 193], [126, 187], [126, 237], [46, 392], [46, 348]
  ].forEach(function (a) { arrow(a[0], a[1], '#00f'); });
  [[62, 94], [142, 50], [270, 6], [46, 306]].forEach(function (a) { arrow(a[0], a[1], 'red'); });
  add(front, 'path', { d: 'M4 385v7l-4-3.500z', fill: 'red' });

  // Bars, 16px apart: high, body top, body bottom, low, type (g up, r down)
  [[380, 381, 381, 397, 'g'], [369, 380, 381, 385, 'g'], [357, 358, 380, 380, 'g'], [333, 348, 358, 358, 'g'],
   [117, 121, 347, 361, 'g'], [117, 124, 138, 172, 'r'], [107, 128, 137, 147, 'g'], [123, 135, 175, 178, 'r'],
   [119, 129, 174, 201, 'g'], [68, 102, 129, 137, 'g'], [91, 103, 104, 112, 'g'], [59, 60, 104, 115, 'g'],
   [58, 61, 83, 89, 'r'], [78, 83, 89, 94, 'r'], [87, 89, 94, 100, 'r'], [61, 79, 93, 98, 'g'],
   [70, 77, 81, 94, 'g'], [49, 51, 77, 79, 'g'], [39, 47, 50, 64, 'g'], [20, 46, 47, 66, 'g'],
   [36, 43, 45, 50, 'g'], [40, 44, 95, 96, 'r'], [84, 95, 105, 109, 'r'], [88, 95, 105, 112, 'g'],
   [65, 87, 110, 113, 'r'], [89, 110, 145, 153, 'r'], [121, 133, 145, 147, 'g'], [132, 133, 154, 158, 'r'],
   [128, 129, 154, 156, 'g'], [110, 117, 129, 141, 'g'], [114, 118, 119, 134, 'g'], [109, 112, 127, 129, 'g'],
   [99, 106, 112, 122, 'g'], [100, 104, 106, 111, 'g'], [90, 104, 108, 109, 'r'], [101, 108, 111, 113, 'r'],
   [110, 110, 115, 122, 'r'], [113, 114, 119, 122, 'r'], [108, 109, 119, 123, 'g'], [95, 96, 109, 117, 'g'],
   [90, 96, 98, 104, 'r'], [77, 83, 98, 101, 'g'], [80, 84, 107, 119, 'r'], [94, 107, 108, 115, 'g'],
   [94, 105, 107, 114, 'g'], [78, 106, 113, 115, 'r'], [112, 113, 137, 150, 'r'], [100, 128, 137, 139, 'g'],
   [104, 129, 143, 155, 'r'], [118, 128, 143, 145, 'g'], [106, 108, 129, 130, 'g'], [93, 103, 109, 113, 'g'],
   [102, 103, 108, 123, 'r'], [108, 109, 113, 126, 'r'], [109, 113, 137, 150, 'r']
  ].forEach(function (b, i) {
    var cx = i * 16;
    add(front, 'rect', { x: cx, y: b[0], width: 1, height: b[3] - b[0], fill: '#000' });
    if (b[2] - b[1] < 2) {
      add(front, 'rect', { x: cx - 5, y: b[1], width: 11, height: b[2] - b[1] + 1, fill: '#000' });
    } else {
      add(front, 'rect', { x: cx - 4.5, y: b[1] + 0.5, width: 10, height: b[2] - b[1], stroke: '#000', fill: b[4] === 'g' ? '#228b22' : '#f00' });
    }
  });

  add(front, 'path', { d: 'M2 5h8l-4 5z' });
  add(front, 'text', { x: 15, y: 11, 'class': 'lbl' }, 'NZDUSD,H1\u00a0 0.83783 0.83807 0.83562 0.83635');
})();
```

FILE: styles.css
```css
* { box-sizing: border-box; }
:root {
  --face: #d6d3ce;
  --navy: #0a246a;
  --shadow: #808080;
  --check: conic-gradient(#fff 25%, #d6d3ce 0 50%, #fff 0 75%, #d6d3ce 0) 0 0 / 2px 2px;
}
body {
  margin: 0;
  height: 100vh;
  display: flex;
  flex-direction: column;
  overflow: hidden;
  background: var(--face);
  color: #000;
  font: 11px/13px "DejaVu Sans Condensed", "DejaVu Sans", sans-serif;
}
h1, h2, p, ul { margin: 0; padding: 0; font-size: 11px; font-weight: normal; }
button { font: inherit; color: inherit; background: none; border: 0; padding: 0; margin: 0; }
svg { display: block; flex: none; }
.defs { position: absolute; }

.titlebar { flex: none; display: flex; align-items: center; height: 18px; background: var(--navy); color: #fff; padding: 0 2px; gap: 1px; }
.titlebar .app-icon { background: #24402c; }
.titlebar h1 { flex: 1; font-weight: bold; white-space: nowrap; }
.winbtns { display: flex; }
.winbtns button { width: 16px; height: 14px; display: flex; align-items: center; justify-content: center; background: var(--face); border: 1px solid; border-color: #fff #404040 #404040 #fff; }
.winbtns .gap { margin-left: 2px; }

.menubar { flex: none; display: flex; align-items: center; height: 21px; padding: 0 2px 0 4px; border-bottom: 1px solid var(--shadow); }
.menu { flex: 1; display: flex; gap: 16px; padding-left: 7px; }

.toolrow { flex: none; display: flex; align-items: flex-start; height: 28px; border-top: 1px solid #fff; }
.toolrow.second { height: 27px; border-top: 0; border-bottom: 2px solid #484848; }
.toolbar { display: flex; align-items: center; height: 26px; padding-right: 1px; border-right: 2px solid; border-image: linear-gradient(90deg, #808080 50%, #fff 50%) 1; border-bottom: 1px solid var(--shadow); box-shadow: 0 1px 0 #fff; }
.second .toolbar { height: 25px; border-bottom: 0; box-shadow: none; }
.grip { width: 3px; height: 18px; margin: 0 3px; background: repeating-linear-gradient(#888 0 1px, #f4f4f4 1px 2px); }
.second .grip { margin-right: 1px; }
.sep { width: 2px; height: 20px; margin: 0 1px 0 3px; background: var(--shadow); border-right: 1px solid #fff; }
.tb { width: 24px; height: 22px; margin: 0 2px; display: flex; align-items: center; justify-content: center; border: 1px solid transparent; }
.on { background: var(--check); border: 1px solid; border-color: #808080 #fff #fff #808080; }
.drop { display: flex; align-items: center; gap: 2px; height: 22px; width: 34px; padding-left: 3px; }
.sep + .drop { margin-left: 3px; }
.tb + .drop { padding-left: 6px; }
.drop b { border: 3px solid transparent; border-top-color: #000; border-bottom: 0; }
.txt { display: flex; align-items: center; gap: 3px; height: 22px; padding: 0 1px 0 4px; white-space: nowrap; }
.txt.on { margin-left: 2px; padding: 0 3px; }
.chat { position: relative; width: 26px; height: 24px; margin: 1px 2px 0 auto; display: grid; place-items: center; border: 1px solid; border-color: #fff #808080 #808080 #fff; }
.chat span { position: absolute; top: 3px; left: 9px; color: #fff; font-weight: bold; }
.tf, .glyph { color: #505050; }
.tf { font-size: 10px; }
.glyph { font-weight: bold; font-size: 13px; }
.boxed { border: 1px dotted #505050; padding: 0 1px; line-height: 12px; }

.work { flex: 1; min-height: 0; display: flex; }
.docks { flex: none; width: 210px; display: flex; flex-direction: column; border-right: 1px solid var(--shadow); }
.dock { flex: 1 1 0; min-height: 0; display: flex; flex-direction: column; padding: 0 3px 2px; border-bottom: 1px solid var(--shadow); }
.dock + .dock { padding: 2px 3px 3px; }
.dock-head { flex: none; display: flex; justify-content: space-between; align-items: center; height: 15px; padding-right: 3px; }
.dock-head h2 { width: 189px; background: var(--navy); color: #fff; padding-left: 2px; line-height: 13px; }
.dock-head.idle h2 { background: var(--shadow); color: #d6d3ce; }
.dock-body { flex: 1; min-height: 0; display: flex; border: 1px solid; border-color: #808080 #fff #000 #808080; background: #fff; }
.clip { flex: 1; min-width: 0; overflow: hidden; }
table { border-collapse: separate; border-spacing: 0; table-layout: fixed; width: 100%; }
th { background: var(--face); font-weight: normal; text-align: right; padding: 0 6px 0 0; border: 1px solid; border-color: #fff #808080 #808080 #fff; white-space: nowrap; }
th:first-child { text-align: left; padding-left: 4px; }
td { white-space: nowrap; text-align: right; border-right: 1px solid #c8c8c8; border-bottom: 1px solid #c8c8c8; overflow: hidden; }
td:first-child { text-align: left; }
td svg { display: inline-block; vertical-align: middle; }
.quotes th { height: 18px; }
.quotes td { height: 20px; padding: 0 4px 0 0; background: #f8fff8; }
.quotes td:first-child { padding-left: 4px; }
.quotes td svg { margin-right: 3px; }
.quotes .dn td + td { color: #f00; }
.quotes .up td + td { color: #00f; }
.w52 { width: 52px; } .w55 { width: 55px; } .w70 { width: 70px; } .w91 { width: 91px; }
.w101 { width: 101px; } .w131 { width: 131px; } .w182 { width: 182px; }
.scroll { flex: none; width: 16px; display: flex; flex-direction: column; background: var(--check); }
.scroll button, .thumb { flex: none; height: 16px; display: grid; place-items: center; background: var(--face); border: 1px solid; border-color: #fff #404040 #404040 #fff; }
.scroll .last { margin-top: auto; }
.thumb.tall { height: 47px; }
.thumb.short { margin-top: 55px; height: 15px; }
.flip { transform: rotate(180deg); }
.tabs { flex: none; display: flex; height: 19px; padding-left: 2px; color: #505050; }
.tabs button { height: 13px; margin-top: 4px; padding: 0 9px; border-right: 1px solid #505050; white-space: nowrap; }
.tabs .active { height: 18px; margin-top: 0; color: #000; background: #fff; border: 1px solid #000; border-top-color: #fff; box-shadow: 1px 1px 0 #808080; }
.dock .tabs { height: 20px; }

.tree { flex: 1; list-style: none; overflow: hidden; padding: 1px 0; }
.tree li { display: flex; align-items: center; height: 18px; padding-left: 26px; position: relative; }
.tree li.root { padding-left: 5px; }
.tree li span { padding: 2px 1px 3px; white-space: nowrap; margin-left: 2px; }
.tree li.root span { padding-left: 2px; }
.tree .sel span { background: var(--navy); color: #fff; }
.tree li:not(.root)::before { content: ""; position: absolute; left: 13px; top: 0; bottom: 0; width: 12px; border-left: 1px dotted #808080; background: repeating-linear-gradient(90deg, #808080 0 1px, transparent 1px 2px) 0 9px / 100% 1px no-repeat; }
.tree li.end::before { bottom: 9px; }
.exp { position: absolute; left: 9px; top: 5px; width: 9px; height: 9px; border: 1px solid #808080; background: linear-gradient(#000, #000) center / 5px 1px no-repeat, linear-gradient(#000, #000) center / 1px 5px no-repeat, #fff; }

.chartwin { flex: 1; min-width: 0; display: flex; flex-direction: column; margin-left: 1px; border-left: 1px solid #404040; }
.chart { flex: 1; min-height: 0; display: grid; grid-template-columns: minmax(0, 1fr) 44px; grid-template-rows: minmax(0, 1fr) 19px; padding: 2px 0 0 1px; background: #fff; font: 9px/11px "DejaVu Sans Condensed", "DejaVu Sans", sans-serif; }
.plot { position: relative; overflow: hidden; border: 1px solid #000; }
.layer { position: absolute; inset: 0; width: 100%; height: 100%; }
.grid { stroke: #c0c0c0; stroke-dasharray: 3 3; }
.day { stroke: #000; stroke-dasharray: 3 3; }
.buy { stroke: #008000; stroke-dasharray: 9 6 3 6; }
.stop { stroke: #ff4500; stroke-dasharray: 9 6 3 6; }
line.level { stroke: #ff4500; }
line.bid { stroke: #c0c0c0; }
line.ask { stroke: #0ff; }
.trend { stroke: #f00; stroke-dasharray: 3 3; }
.deal { stroke: #00f; stroke-dasharray: 3 3; }
.lbl { font-size: 9px; fill: #000; }
.ea { position: absolute; top: 25px; right: 5px; bottom: 0; width: 280px; overflow: hidden; padding: 11px 10px 0 0; background: #191970; color: #fff; text-align: right; font: 300 15px/18px "Open Sans", "Noto Sans", sans-serif; }
.ea p { font: inherit; white-space: nowrap; }
.ea .in { padding-right: 5px; }
.ea-name { position: absolute; top: 3px; right: 5px; display: flex; align-items: center; gap: 2px; background: #fff; }
.prices { position: relative; padding-top: 4px; overflow: hidden; }
.prices span { display: flex; align-items: center; height: 11px; margin-bottom: 22px; }
.prices span::before { content: ""; width: 2px; height: 1px; margin-right: 3px; background: #000; }
.prices mark { position: absolute; left: 2px; right: 2px; padding-left: 3px; color: #fff; background: #000; }
.prices .ask { top: 67px; background: #0ff; }
.prices .level { top: 117px; background: #ff4500; }
.prices .bid { top: 132px; }
.lock { position: absolute; top: 1px; left: 17px; }
.times { grid-column: 1 / -1; display: flex; overflow: hidden; }
.times span { flex: none; width: 64px; white-space: nowrap; padding-top: 3px; background: linear-gradient(#000, #000) 1px 0 / 1px 3px no-repeat; }
.chart-tabs { flex: none; display: flex; height: 20px; padding-left: 1px; border-top: 1px solid #000; background: var(--face); color: #505050; }
.chart-tabs button { width: 80px; height: 12px; line-height: 12px; margin-top: 3px; border-right: 1px solid #505050; }
.chart-tabs .pre { border-color: transparent; }
.chart-tabs .active { height: 18px; margin-top: 0; background: #fff; color: #000; border: 1px solid #000; border-top: 0; }
.chart-tabs svg { margin: 4px 1px 0 auto; }

.terminal { flex: none; display: flex; height: 158px; padding: 3px 3px 4px 1px; border-top: 1px solid #fff; border-bottom: 1px solid var(--shadow); }
.strip { flex: none; width: 14px; display: flex; flex-direction: column; align-items: center; }
.strip button { height: 13px; display: grid; place-items: center; }
.strip h2 { flex: 1; width: 13px; background: var(--shadow); color: #d6d3ce; writing-mode: vertical-rl; transform: rotate(180deg); line-height: 13px; }
.term-main { flex: 1; min-width: 0; display: flex; flex-direction: column; border-left: 1px solid var(--shadow); border-top: 1px solid var(--shadow); }
.term-body { flex: 1; min-height: 0; display: flex; border-bottom: 1px solid #000; }
.orders th { height: 18px; border-color: #fff #606060 #404040 #fff; }
.orders th .sort { display: inline-block; margin-left: 5px; vertical-align: middle; }
.orders td { height: 20px; padding: 0 4px 0 0; background: #fff; }
.orders td:first-child { padding-left: 2px; }
.orders td:first-child svg { margin-right: 6px; }
.orders .alt td { background: #efebef; }
.orders .sel td { background: var(--navy); color: #fff; }
.orders .sum td { background: #cccacc; font-weight: bold; border-right: 0; height: 20px; }
.orders td:last-child { border-right: 0; padding-right: 7px; }
.orders .sum td:last-child { padding-right: 25px; }
.orders th:last-child { padding-right: 7px; }
.orders td button { margin-left: 10px; vertical-align: middle; }

.status { flex: none; display: grid; grid-template-columns: minmax(0, 1fr) 109px 101px 72px 71px 70px 71px 65px 162px; align-items: end; height: 22px; padding-bottom: 1px; border-bottom: 1px solid #fff; }
.status > span { height: 17px; line-height: 17px; padding-left: 4px; border-left: 1px solid var(--shadow); box-shadow: inset 1px 0 0 #fff; white-space: nowrap; }
.status > span:first-child { border: 0; box-shadow: none; padding-left: 2px; }
.status .net { display: flex; align-items: center; gap: 31px; }
.status .size { margin-left: auto; }

.taskbar { flex: none; display: flex; align-items: center; height: 43px; padding: 0 2px; }
.start { display: flex; align-items: center; height: 38px; width: 51px; font-weight: bold; border: 1px solid; border-color: #fff #404040 #404040 #fff; }
.bar { width: 3px; height: 35px; margin: 0 0 0 7px; border: 1px solid; border-color: #fff #808080 #808080 #fff; background: #fff; }
.quick { display: flex; gap: 17px; padding: 0 10px 0 16px; }
.task { width: 48px; height: 39px; margin-right: 2px; display: grid; place-items: center; border: 1px solid; border-color: #fff #404040 #404040 #fff; box-shadow: inset -1px -1px 0 #808080; }
.task.run { background: #fff; border-color: #404040 #fff #fff #404040; box-shadow: none; }
.bar.right { margin-left: auto; }
.lang { width: 28px; height: 22px; padding-left: 4px; border-right: 1px solid var(--shadow); }
.tray { display: flex; align-items: center; gap: 7px; height: 38px; margin-left: 3px; padding: 0 0 0 5px; border: 1px solid; border-color: #808080 #fff #fff #808080; }
.clock { display: grid; gap: 3px; text-align: center; padding-left: 5px; }
```
